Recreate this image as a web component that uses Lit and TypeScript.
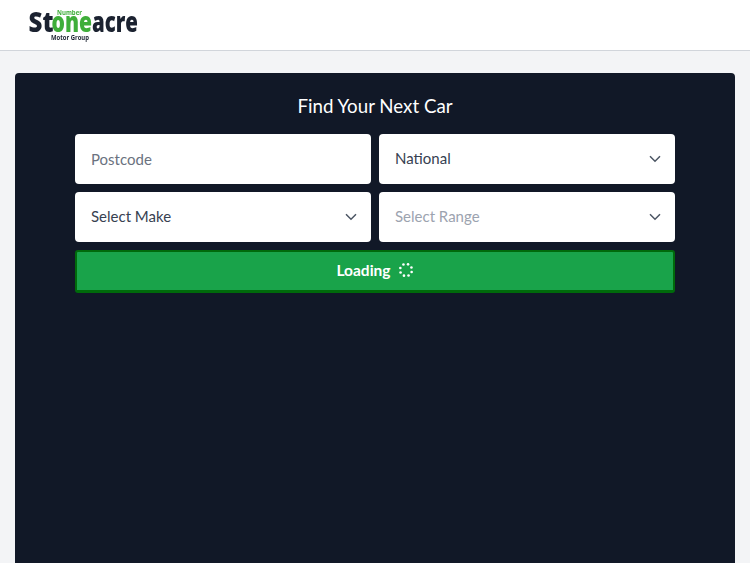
import { LitElement, html, css, svg } from "lit";
import { customElement } from "lit/decorators.js";

const chevron = html`<svg class="chev" viewBox="0 0 12 8" width="12" height="8" fill="none"><path d="M1 1.2l5 5 5-5" stroke="#4b5563" stroke-width="1.5"/></svg>`;

const dots = [20, 65, 110, 155, 200, 245, 290, 335];

@customElement("app-root")
export class AppRoot extends LitElement {
  static styles = css`
    :host { display: block; height: 563px; overflow: hidden; background: #f3f4f6; font-family: Lato, sans-serif; }
    .head { height: 50px; background: #fff; border-bottom: 1px solid #d1d5db; padding-left: 28px; }
    .logo { display: block; filter: blur(0.25px); }
    .logo text { font-family: "Open Sans", sans-serif; }
    .main { padding: 22px 15px 0; }
    .card { background: #111827; border-radius: 4px 4px 0 0; height: 520px; padding: 22px 60px 0; box-sizing: border-box; }
    h1 { margin: 0 0 16px; font-weight: 400; font-size: 18.72px; line-height: 23px; text-align: center; color: #fff; }
    .grid { display: grid; grid-template-columns: 296px 296px; gap: 8px; }
    .field { height: 50px; box-sizing: border-box; background: #fff; border-radius: 4px; display: flex; align-items: center; justify-content: space-between; padding: 0 14px 0 16px; font-size: 15px; color: #374151; }
    .field.sel { padding-bottom: 2px; }
    .field.sel .chev { margin-top: 2px; }
    .field.ph { color: #6b7280; }
    .field.dim { color: #9ca3af; }
    .btn { grid-column: 1 / 3; height: 43px; box-sizing: border-box; background: #19a34a; border: 2px solid #006a0b; border-bottom-width: 3px; border-radius: 3px; padding-bottom: 2px; display: flex; align-items: center; justify-content: center; gap: 7px; color: #fff; font-weight: 700; font-size: 15.5px; }
    .spin { display: block; }
  `;
  render() {
    return html`
      <div class="head">
        <svg class="logo" width="170" height="50" viewBox="0 0 170 50">
          <text x="29" y="15" font-size="7" font-weight="700" fill="#3fae3a" textLength="25" lengthAdjust="spacingAndGlyphs">Number</text>
          <text x="0.5" y="32" font-size="29" font-weight="800" fill="#1b2230" textLength="25" lengthAdjust="spacingAndGlyphs">St</text>
          <text x="23.5" y="32" font-size="29" font-weight="800" fill="#3fae3a" textLength="40.5" lengthAdjust="spacingAndGlyphs">one</text>
          <text x="64" y="32" font-size="29" font-weight="800" fill="#1b2230" textLength="46" lengthAdjust="spacingAndGlyphs">acre</text>
          <text x="23" y="39.5" font-size="7.5" font-weight="700" fill="#1b2230" textLength="38" lengthAdjust="spacingAndGlyphs">Motor Group</text>
        </svg>
      </div>
      <div class="main">
        <div class="card">
          <h1>Find Your Next Car</h1>
          <div class="grid">
            <div class="field ph">Postcode</div>
            <div class="field sel">National ${chevron}</div>
            <div class="field sel">Select Make ${chevron}</div>
            <div class="field sel dim">Select Range ${chevron}</div>
            <div class="btn">Loading
              <svg class="spin" width="16" height="16" viewBox="0 0 16 16" fill="#fff">
                ${dots.map((a) => {
                  const r = (a * Math.PI) / 180;
                  return svg`<circle cx="${8 + 6 * Math.cos(r)}" cy="${8 + 6 * Math.sin(r)}" r="1.3"/>`;
                })}
              </svg>
            </div>
          </div>
        </div>
      </div>
    `;
  }
}
